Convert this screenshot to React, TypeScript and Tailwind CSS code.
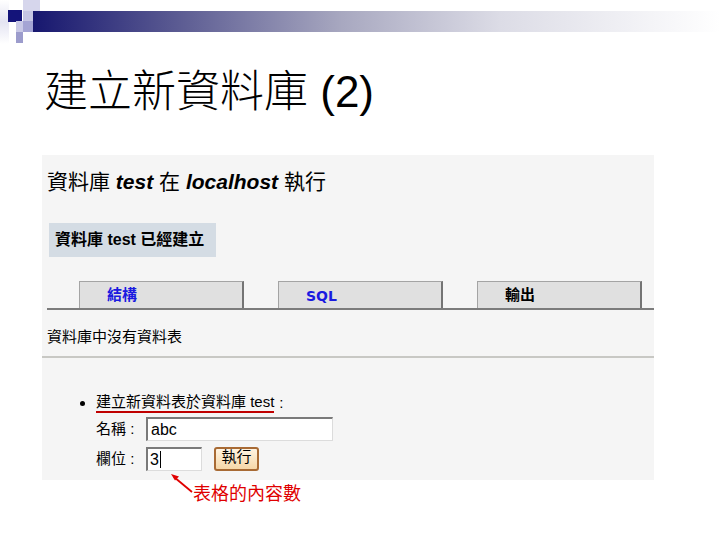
const ui = "font-['Liberation_Sans','Noto_Sans_CJK_TC',sans-serif]";

function HeaderMark() {
  return (
    <div className="relative h-[44px]">
      <div className="absolute left-0 top-0 w-[9px] h-[44px] bg-[linear-gradient(to_bottom,#ffffff,#e4e4f2,#ffffff)]" />
      <div className="absolute left-[8px] top-[10px] w-[14px] h-[12px] bg-[#14147a]" />
      <div className="absolute left-[23px] top-0 w-[17px] h-[11px] bg-[#d6d6ec]" />
      <div className="absolute left-[23px] top-[11px] w-[10px] h-[10px] bg-[#c6c6e4]" />
      <div className="absolute left-[16px] top-[21px] w-[17px] h-[11px] bg-[#c8c8e6]" />
      <div className="absolute left-[23px] top-[21px] w-[10px] h-[11px] bg-[#a4a4d4]" />
      <div className="absolute left-[16px] top-[32px] w-[7px] h-[11px] bg-[#9c9ccc]" />
      <div className="pl-[33px] pt-[11px]">
        <div className="h-[21px] bg-[linear-gradient(to_right,#17176f_0%,#5e5e94_22%,#a8a8c0_45%,#dcdce6_68%,#ffffff_100%)]" />
      </div>
    </div>
  );
}

function Tab({ label, className }: { label: string; className: string }) {
  return (
    <div className="w-[165px] h-[27px] bg-[#e0e0e0] border-t border-l border-[#a4a4a4] border-r-2 border-r-[#747474] pl-[27px] pt-[1px]">
      <span className={className}>{label}</span>
    </div>
  );
}

export default function App() {
  return (
    <div className={`w-[720px] h-[540px] bg-white overflow-hidden ${ui}`}>
      <HeaderMark />

      <h1 className="mt-[26px] ml-[44px] h-[44px] text-[44px] leading-[44px] text-black font-['Liberation_Sans','Noto_Sans_CJK_TC',sans-serif] font-light">
        建立新資料庫 (2)
      </h1>

      <div className="mt-[41px] ml-[42px] w-[612px] h-[325px] bg-[#f5f5f5]">
        <div className="pt-[14px] pl-[5px] text-[21px] leading-[26px] text-black">
          資料庫 <b className="italic">test</b> 在 <b className="italic">localhost</b> 執行
        </div>

        <div className="mt-[28px] ml-[7px] w-[167px] h-[34px] bg-[#d4dce4] pl-[6px] text-[16px] leading-[34px] font-bold text-black">
          資料庫 test 已經建立
        </div>

        <div className="mt-[24px] ml-[5px] flex gap-[34px] pl-[32px] border-b-2 border-[#7c7c7c]">
          <Tab label="結構" className="text-[15px] font-bold text-[#1a1ae0]" />
          <Tab label="SQL" className="inline-block pt-[3px] text-[14px] font-bold text-[#1a1ae0] font-['DejaVu_Sans',sans-serif]" />
          <Tab label="輸出" className="text-[15px] font-bold text-black" />
        </div>

        <div className="mt-[17px] pl-[5px] text-[15px] leading-[20px] text-black">資料庫中沒有資料表</div>

        <div className="mt-[9px] h-[2px] bg-[#c8c8c4]" />

        <div className="mt-[35px] ml-[38px] flex items-center h-[20px] text-[15px] text-black">
          <span className="w-[5px] h-[5px] rounded-full bg-black" />
          <span className="ml-[11px] border-b-2 border-[#c00000] leading-[18px]">建立新資料表於資料庫 test</span>
          <span className="ml-[5px]">:</span>
        </div>

        <div className="mt-[4px] ml-[54px] flex items-center text-[15px] text-black">
          <span className="w-[50px]">名稱 :</span>
          <div className="w-[187px] h-[24px] bg-white border-t-2 border-l-2 border-[#7a7a7a] border-b border-r border-b-[#dcdcdc] border-r-[#dcdcdc] pl-[3px] leading-[21px] text-[16px]">
            abc
          </div>
        </div>

        <div className="mt-[6px] ml-[54px] flex items-center text-[15px] text-black">
          <span className="w-[50px]">欄位 :</span>
          <div className="w-[56px] h-[24px] bg-white border-t-2 border-l-2 border-[#7a7a7a] border-b border-r border-b-[#dcdcdc] border-r-[#dcdcdc] pl-[2px] leading-[21px] text-[16px] flex items-center">
            3<span className="ml-px w-px h-[17px] bg-black" />
          </div>
          <div className="ml-[12px] w-[45px] h-[24px] rounded-[3px] border-2 border-[#a86a34] bg-[linear-gradient(to_bottom,#fff4e2,#f6d7a8)] text-center text-[15px] leading-[16px]">
            執行
          </div>
        </div>
      </div>

      <div className="relative h-[30px]">
        <svg className="absolute left-[166px] top-[-10px]" width="30" height="26" viewBox="0 0 30 26">
          <line x1="26" y1="22" x2="8" y2="7" stroke="#e00000" strokeWidth="1.8" />
          <polygon points="5,4 13,6.5 9,10.5" fill="#e00000" />
        </svg>
        <div className="pl-[193px] pt-[3px] text-[18px] leading-[22px] text-[#e00000]">表格的內容數</div>
      </div>
    </div>
  );
}
